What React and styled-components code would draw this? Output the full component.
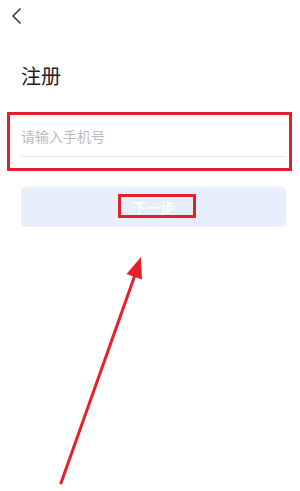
import React from "react";
import styled, { createGlobalStyle } from "styled-components";

const Global = createGlobalStyle`
  html, body { margin: 0; padding: 0; background: #ffffff; }
  body { font-family: "Noto Sans CJK SC", "Noto Sans", sans-serif; }
  * { box-sizing: border-box; }
`;

const Page = styled.div`
  position: relative;
  width: 300px;
  height: 491px;
  overflow: hidden;
  background: #ffffff;
`;

const Header = styled.div`
  height: 32px;
  display: flex;
  align-items: flex-start;
  padding: 8px 0 0 12px;
`;

const BackButton = styled.button`
  border: none;
  background: none;
  padding: 0;
  width: 10px;
  height: 16px;
  display: block;
`;

const Content = styled.div`
  padding: 0 14px 0 21px;
`;

const Title = styled.h1`
  margin: 31px 0 0;
  font-size: 20px;
  line-height: 26px;
  font-weight: 400;
  color: #222222;
`;

const FieldWrap = styled.div`
  position: relative;
  margin-top: 28px;
`;

const Input = styled.input`
  display: block;
  width: 100%;
  height: 40px;
  border: none;
  border-bottom: 1px solid #e6e6e6;
  padding: 0 0 2px;
  outline: none;
  font-family: inherit;
  font-size: 14px;
  color: #333;
  background: transparent;
  &::placeholder { color: #bbbbbb; }
`;

const Highlight = styled.div`
  position: absolute;
  border: 3px solid #e5202b;
  pointer-events: none;
  top: ${p => p.$top}px;
  left: ${p => p.$left}px;
  width: ${p => p.$w}px;
  height: ${p => p.$h}px;
`;

const NextButton = styled.button`
  position: relative;
  display: flex;
  align-items: center;
  justify-content: center;
  width: 100%;
  height: 40px;
  margin-top: 30px;
  border: none;
  border-radius: 5px;
  background: #e7eefc;
  color: #ffffff;
  font-family: inherit;
  font-size: 14px;
  font-weight: 500;
  padding: 0;
`;

const ArrowLayer = styled.svg`
  position: absolute;
  left: 0;
  top: 0;
  pointer-events: none;
`;

export default function App() {
  return (
    <Page>
      <Global />
      <Header>
        <BackButton aria-label="back">
          <svg width="10" height="16" viewBox="0 0 10 16">
            <path d="M8.5 0.5 L1 8 L8.5 15.5" fill="none" stroke="#333" strokeWidth="1.5" />
          </svg>
        </BackButton>
      </Header>
      <Content>
        <Title>注册</Title>
        <FieldWrap>
          <Input placeholder="请输入手机号" />
          <Highlight $top={-5} $left={-14} $w={285} $h={59} />
        </FieldWrap>
        <NextButton>
          下一步
          <Highlight $top={7} $left={97} $w={78} $h={24} />
        </NextButton>
      </Content>
      <ArrowLayer width="300" height="491" viewBox="0 0 300 491">
        <line x1="61" y1="483" x2="135" y2="275" stroke="#e5202b" strokeWidth="3" strokeLinecap="round" />
        <polygon points="141,257 126.5,274 142,279.5" fill="#e5202b" />
      </ArrowLayer>
    </Page>
  );
}
